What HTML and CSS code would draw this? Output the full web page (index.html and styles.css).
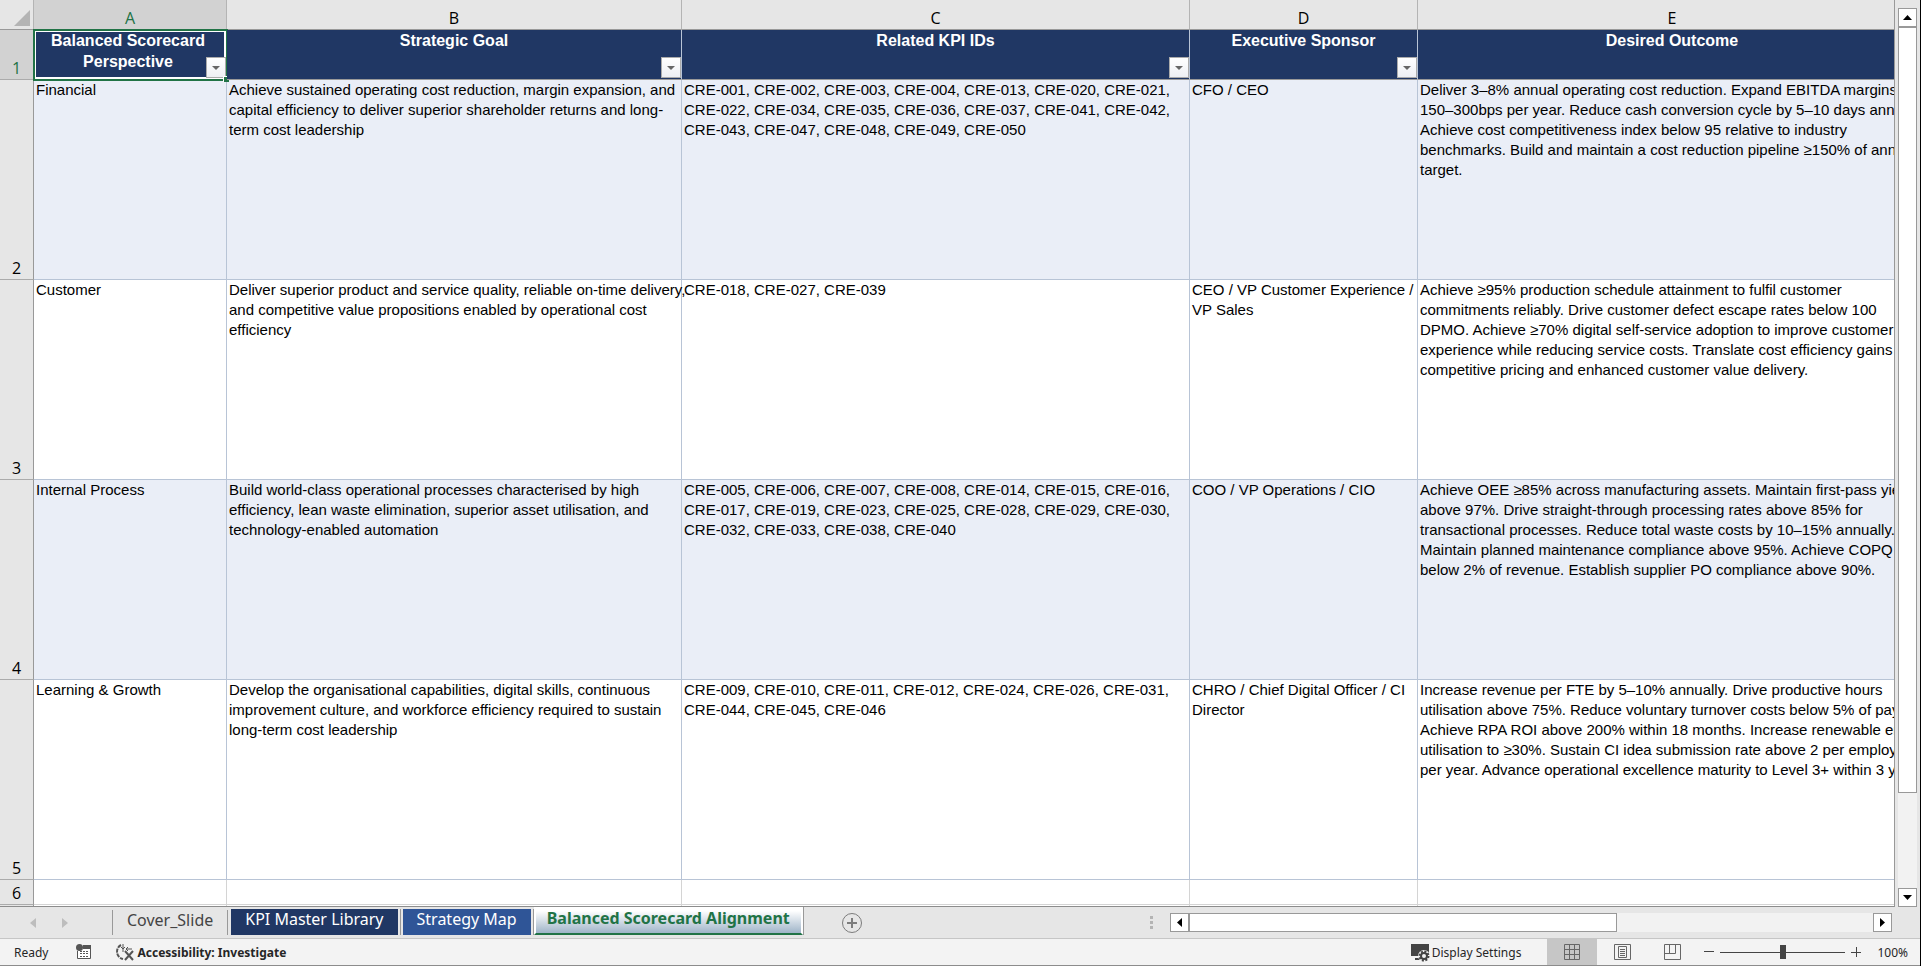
FILE: index.html
```html
<!DOCTYPE html>
<html lang="en">
<head>
    <meta charset="UTF-8">
    <title>Balanced Scorecard Alignment</title>
    <link rel="stylesheet" href="styles.css">
</head>
<body>

<main class="workspace">
    <div class="sheet">
        <table class="grid">
            <colgroup>
                <col class="col-num">
                <col class="col-a">
                <col class="col-b">
                <col class="col-c">
                <col class="col-d">
                <col class="col-e">
            </colgroup>
            <thead>
                <tr class="letters">
                    <td class="corner"><svg width="34" height="29"><path d="M30 10V26H14z" fill="#b4b4b4"/></svg></td>
                    <th class="active">A</th>
                    <th>B</th>
                    <th>C</th>
                    <th>D</th>
                    <th>E</th>
                </tr>
            </thead>
            <tbody>
                <tr class="titles">
                    <th class="num active">1</th>
                    <td class="selected">Balanced Scorecard<br>Perspective<button class="filter" aria-label="Filter perspective"></button><i class="handle"></i></td>
                    <td>Strategic Goal<button class="filter" aria-label="Filter goal"></button></td>
                    <td>Related KPI IDs<button class="filter" aria-label="Filter KPI IDs"></button></td>
                    <td>Executive Sponsor<button class="filter" aria-label="Filter sponsor"></button></td>
                    <td>Desired Outcome</td>
                </tr>
                <tr class="data tint">
                    <th class="num">2</th>
                    <td>Financial</td>
                    <td>Achieve sustained operating cost reduction, margin expansion, and<br>capital efficiency to deliver superior shareholder returns and long-<br>term cost leadership</td>
                    <td>CRE-001, CRE-002, CRE-003, CRE-004, CRE-013, CRE-020, CRE-021,<br>CRE-022, CRE-034, CRE-035, CRE-036, CRE-037, CRE-041, CRE-042,<br>CRE-043, CRE-047, CRE-048, CRE-049, CRE-050</td>
                    <td>CFO / CEO</td>
                    <td>Deliver 3–8% annual operating cost reduction. Expand EBITDA margins by<br>150–300bps per year. Reduce cash conversion cycle by 5–10 days annually.<br>Achieve cost competitiveness index below 95 relative to industry<br>benchmarks. Build and maintain a cost reduction pipeline ≥150% of annual<br>target.</td>
                </tr>
                <tr class="data">
                    <th class="num">3</th>
                    <td>Customer</td>
                    <td>Deliver superior product and service quality, reliable on-time delivery,<br>and competitive value propositions enabled by operational cost<br>efficiency</td>
                    <td>CRE-018, CRE-027, CRE-039</td>
                    <td>CEO / VP Customer Experience /<br>VP Sales</td>
                    <td>Achieve ≥95% production schedule attainment to fulfil customer<br>commitments reliably. Drive customer defect escape rates below 100<br>DPMO. Achieve ≥70% digital self-service adoption to improve customer<br>experience while reducing service costs. Translate cost efficiency gains into<br>competitive pricing and enhanced customer value delivery.</td>
                </tr>
                <tr class="data tint">
                    <th class="num">4</th>
                    <td>Internal Process</td>
                    <td>Build world-class operational processes characterised by high<br>efficiency, lean waste elimination, superior asset utilisation, and<br>technology-enabled automation</td>
                    <td>CRE-005, CRE-006, CRE-007, CRE-008, CRE-014, CRE-015, CRE-016,<br>CRE-017, CRE-019, CRE-023, CRE-025, CRE-028, CRE-029, CRE-030,<br>CRE-032, CRE-033, CRE-038, CRE-040</td>
                    <td>COO / VP Operations / CIO</td>
                    <td>Achieve OEE ≥85% across manufacturing assets. Maintain first-pass yield<br>above 97%. Drive straight-through processing rates above 85% for<br>transactional processes. Reduce total waste costs by 10–15% annually.<br>Maintain planned maintenance compliance above 95%. Achieve COPQ<br>below 2% of revenue. Establish supplier PO compliance above 90%.</td>
                </tr>
                <tr class="data">
                    <th class="num">5</th>
                    <td>Learning &amp; Growth</td>
                    <td>Develop the organisational capabilities, digital skills, continuous<br>improvement culture, and workforce efficiency required to sustain<br>long-term cost leadership</td>
                    <td>CRE-009, CRE-010, CRE-011, CRE-012, CRE-024, CRE-026, CRE-031,<br>CRE-044, CRE-045, CRE-046</td>
                    <td>CHRO / Chief Digital Officer / CI<br>Director</td>
                    <td>Increase revenue per FTE by 5–10% annually. Drive productive hours<br>utilisation above 75%. Reduce voluntary turnover costs below 5% of payroll.<br>Achieve RPA ROI above 200% within 18 months. Increase renewable energy<br>utilisation to ≥30%. Sustain CI idea submission rate above 2 per employee<br>per year. Advance operational excellence maturity to Level 3+ within 3 years.</td>
                </tr>
                <tr class="empty">
                    <th class="num">6</th>
                    <td></td>
                    <td></td>
                    <td></td>
                    <td></td>
                    <td></td>
                </tr>
                <tr class="empty">
                    <th class="num"></th>
                    <td></td>
                    <td></td>
                    <td></td>
                    <td></td>
                    <td></td>
                </tr>
            </tbody>
        </table>
    </div>
    <div class="vscroll">
        <button class="arrow" aria-label="Scroll up"><svg width="9" height="5"><path d="M4.500 0L9 5H0z"/></svg></button>
        <div class="vtrack"><div class="vthumb"></div></div>
        <button class="arrow" aria-label="Scroll down"><svg width="9" height="5"><path d="M0 0H9L4.500 5z"/></svg></button>
    </div>
</main>

<nav class="tabbar">
    <div class="tabnav">
        <button aria-label="Previous sheet"><svg width="6" height="10"><path d="M6 0V10L0 5z"/></svg></button>
        <button aria-label="Next sheet"><svg width="6" height="10"><path d="M0 0V10L6 5z"/></svg></button>
    </div>
    <div class="tabs">
        <button class="tab plain">Cover_Slide</button>
        <button class="tab navy">KPI Master Library</button>
        <button class="tab blue">Strategy Map</button>
        <button class="tab current">Balanced Scorecard Alignment</button>
    </div>
    <button class="add" aria-label="New sheet">
        <svg width="22" height="22" fill="none" stroke="#7c7c7c"><circle cx="11" cy="11" r="9.500"/><path d="M11 6V16M6 11H16" stroke-width="2"/></svg>
    </button>
    <div class="dots"><i></i><i></i><i></i></div>
    <div class="hscroll">
        <button class="arrow" aria-label="Scroll left"><svg width="5" height="9"><path d="M5 0V9L0 4.500z"/></svg></button>
        <div class="htrack"><div class="hthumb"></div></div>
        <button class="arrow" aria-label="Scroll right"><svg width="5" height="9"><path d="M0 0V9L5 4.500z"/></svg></button>
    </div>
</nav>

<footer class="status">
    <span class="ready">Ready</span>
    <button class="macro" aria-label="Record macro">
        <svg width="16" height="16"><path d="M1.500 7V14.500H14.500V3" fill="#fff" stroke="#555"/><path d="M7 1H15V5H7z" fill="#555"/><circle cx="3.500" cy="3.500" r="3.500" fill="#555"/><path d="M4 7.500H13M4 9.500H13M4 12.500H13" stroke="#555" stroke-dasharray="2 1"/></svg>
    </button>
    <button class="access">
        <svg width="20" height="18" fill="none" stroke="#555"><path d="M6 2A7.500 7.500 0 0 0 8 16" stroke-width="2" stroke-dasharray="4 1"/><path d="M8 1V5M6 4L8 6L10 4M17 6H11M13 4L11 6L13 8M8 6V9"/><path d="M10 8L18 17M18 8L10 17" stroke-width="2"/></svg>
        Accessibility: Investigate
    </button>
    <button class="display">
        <svg width="20" height="19"><path d="M1 1H19V13H1z" fill="#444"/><path d="M5 16H10V13" fill="none" stroke="#444" stroke-width="2"/><circle cx="14" cy="13" r="6" fill="#f3f3f3"/><circle cx="14" cy="13" r="3" fill="none" stroke="#444" stroke-width="2"/><circle cx="14" cy="13" r="4.500" fill="none" stroke="#444" stroke-width="2" stroke-dasharray="2 1.500"/></svg>
        Display Settings
    </button>
    <div class="views">
        <button class="on" aria-label="Normal"><svg width="16" height="16"><path d="M.500 .500H15.500V15.500H.500zM5.500 0V16M10.500 0V16M0 5.500H16M0 10.500H16"/></svg></button>
        <button aria-label="Page layout"><svg width="17" height="16"><path d="M.500 .500H16.500V15.500H.500zM4.500 2.500H12.500V13.500H4.500zM6 5.500H11M6 7.500H11M6 9.500H11M6 11.500H11"/></svg></button>
        <button aria-label="Page break preview"><svg width="17" height="16"><path d="M.500 .500H16.500V15.500H.500zM5.500 0V9.500M0 9.500H11.500M11.500 0V9.500"/></svg></button>
    </div>
    <div class="zoom">
        <button aria-label="Zoom out"><svg width="10" height="10"><path d="M0 4.500H10"/></svg></button>
        <input type="range" min="0" max="100" value="50" aria-label="Zoom">
        <button aria-label="Zoom in"><svg width="10" height="10"><path d="M0 5.500H10M5.500 0V10"/></svg></button>
        <span class="percent">100%</span>
    </div>
</footer>

</body>
</html>
```
FILE: styles.css
```css
* {
    box-sizing: border-box;
}
body {
    display: flex;
    flex-direction: column;
    height: 100vh;
    margin: 0;
    overflow: hidden;
    background: #e6e6e6;
    border-right: 1px solid #000;
    font-family: "Noto Sans", "Open Sans", sans-serif;
    font-size: 12px;
    color: #262626;
}
button {
    margin: 0;
    padding: 0;
    border: 0;
    background: none;
    font: inherit;
    color: inherit;
}
svg {
    display: block;
}

/* worksheet */
.workspace {
    display: flex;
    flex: 1;
    gap: 3px;
    min-height: 0;
    padding-right: 3px;
}
.sheet {
    flex: 1;
    min-width: 0;
    overflow: hidden;
    border-right: 1px solid #999;
    border-bottom: 1px solid #8c8c8c;
}
.grid {
    width: 1927px;
    table-layout: fixed;
    border-collapse: separate;
    border-spacing: 0;
    background: #fff;
    font-family: "Liberation Sans", Arial, sans-serif;
    font-size: 15px;
    line-height: 20px;
    color: #000;
}
.col-num { width: 34px; }
.col-a { width: 193px; }
.col-b { width: 455px; }
.col-c { width: 508px; }
.col-d { width: 228px; }
.col-e { width: 509px; }
.grid th,
.grid td {
    padding: 0;
    border-right: 1px solid #b8c4d6;
    border-bottom: 1px solid #b8c4d6;
    text-align: left;
    vertical-align: top;
    white-space: nowrap;
}
.grid .letters th,
.grid .letters td {
    height: 30px;
    background: #e6e6e6;
    border-right-color: #b4b4b4;
    border-bottom-color: #999;
    font: 16px/22px "Open Sans", "Noto Sans", sans-serif;
    text-align: center;
    vertical-align: bottom;
}
.grid .num {
    background: #e6e6e6;
    border-right-color: #999;
    border-bottom-color: #ababab;
    font: 16px/22px "Open Sans", "Noto Sans", sans-serif;
    text-align: center;
    vertical-align: bottom;
}
.grid .letters .active,
.grid .num.active {
    background: #d2d2d2;
    color: #217346;
}
.titles td {
    position: relative;
    height: 50px;
    background: #203764;
    font-size: 16px;
    font-weight: bold;
    line-height: 21px;
    color: #fff;
}
.grid .titles td {
    border-bottom-color: #999;
    text-align: center;
}
.grid .titles .selected {
    padding-right: 4px;
    outline: 2px solid #217346;
    outline-offset: -1px;
    box-shadow: inset 0 0 0 2px #fff;
}
.filter {
    position: absolute;
    right: 0;
    bottom: 1px;
    width: 20px;
    height: 21px;
    border: 1px solid #ababab;
    background: linear-gradient(#fff, #eef0f4);
}
.filter::after {
    content: "";
    position: absolute;
    left: 5px;
    top: 8px;
    border: 4px solid transparent;
    border-top-color: #666;
    border-bottom: 0;
}
.handle {
    position: absolute;
    right: -3px;
    bottom: -3px;
    width: 6px;
    height: 6px;
    border: 1px solid #fff;
    border-width: 1px 0 0 1px;
    background: #217346;
}
.data td {
    height: 200px;
}
.grid .data td {
    padding-left: 2px;
}
.tint td {
    background: #eaeef7;
}
.empty td {
    height: 25px;
}
.grid .empty td {
    border-color: #d4d4d4;
}

/* scroll bars */
.arrow {
    display: flex;
    align-items: center;
    justify-content: center;
    flex: none;
    width: 19px;
    height: 19px;
    border: 1px solid #999;
    background: #fff;
}
.vscroll {
    display: flex;
    flex-direction: column;
    width: 19px;
    padding-top: 8px;
}
.vtrack {
    flex: 1;
    background: #f2f2f2;
}
.vthumb {
    height: 89%;
    border: 1px solid #999;
    background: #fff;
}
.hscroll {
    display: flex;
    width: 722px;
    margin-right: 28px;
}
.htrack {
    flex: 1;
    background: #f2f2f2;
}
.hthumb {
    width: 62.5%;
    height: 19px;
    border: 1px solid #999;
    background: #fff;
}

/* sheet tabs */
.tabbar {
    display: flex;
    align-items: center;
    height: 32px;
    border-bottom: 1px solid #c6c6c6;
}
.tabnav {
    display: flex;
    gap: 26px;
    width: 112px;
    padding-left: 30px;
    fill: #bdbdbd;
}
.tabs {
    display: flex;
    align-self: stretch;
    font-size: 16px;
    line-height: 20px;
}
.tab {
    height: 26px;
    margin: 2px 3px 0 2px;
    padding: 0 14px 6px;
    white-space: nowrap;
}
.plain {
    height: 25px;
    margin: 3px 1px 0 0;
    border: 1px solid #999;
    border-width: 0 1px;
    color: #444;
}
.navy,
.blue {
    color: #fff;
    box-shadow: 2px 0 #e6e6e6, 3px 0 #999;
}
.navy {
    background: #203764;
}
.blue {
    margin-right: 0;
    background: #2f5597;
}
.tab.current {
    height: 28px;
    margin: 0 0 0 3px;
    padding: 0 11px 4px;
    border: 2px solid #fff;
    border-top: 0;
    border-bottom: 2px solid #217346;
    background: linear-gradient(#fff 15%, #9fb4c8);
    box-shadow: 1px 0 #999;
    font-weight: bold;
    color: #217346;
}
.add {
    margin-left: 38px;
}
.dots {
    display: grid;
    gap: 2px;
    margin: 0 17px 0 auto;
}
.dots i {
    width: 3px;
    height: 3px;
    background: #b4b4b4;
}

/* status bar */
.status {
    display: flex;
    align-items: center;
    height: 27px;
    padding-left: 14px;
    background: #f3f3f3;
    border-bottom: 1px solid #8c8c8c;
}
.macro {
    margin: 0 23px 0 28px;
}
.access,
.display {
    display: flex;
    align-items: center;
    gap: 2px;
    white-space: nowrap;
}
.access {
    font-weight: bold;
}
.display {
    margin: 0 26px 0 auto;
}
.views {
    display: flex;
    align-self: stretch;
    fill: none;
    stroke: #666;
}
.views button {
    display: flex;
    align-items: center;
    justify-content: center;
    width: 50px;
}
.views .on {
    background: #c6c6c6;
}
.zoom {
    display: flex;
    align-items: center;
    gap: 6px;
    padding: 0 12px 0 7px;
    stroke: #444;
}
.zoom input {
    width: 125px;
    height: 14px;
    margin: 0;
    appearance: none;
    background: linear-gradient(#444, #444) center / 100% 1px no-repeat;
}
.zoom input::-webkit-slider-thumb {
    appearance: none;
    width: 6px;
    height: 14px;
    background: #444;
}
.percent {
    margin-left: 10px;
}
```
